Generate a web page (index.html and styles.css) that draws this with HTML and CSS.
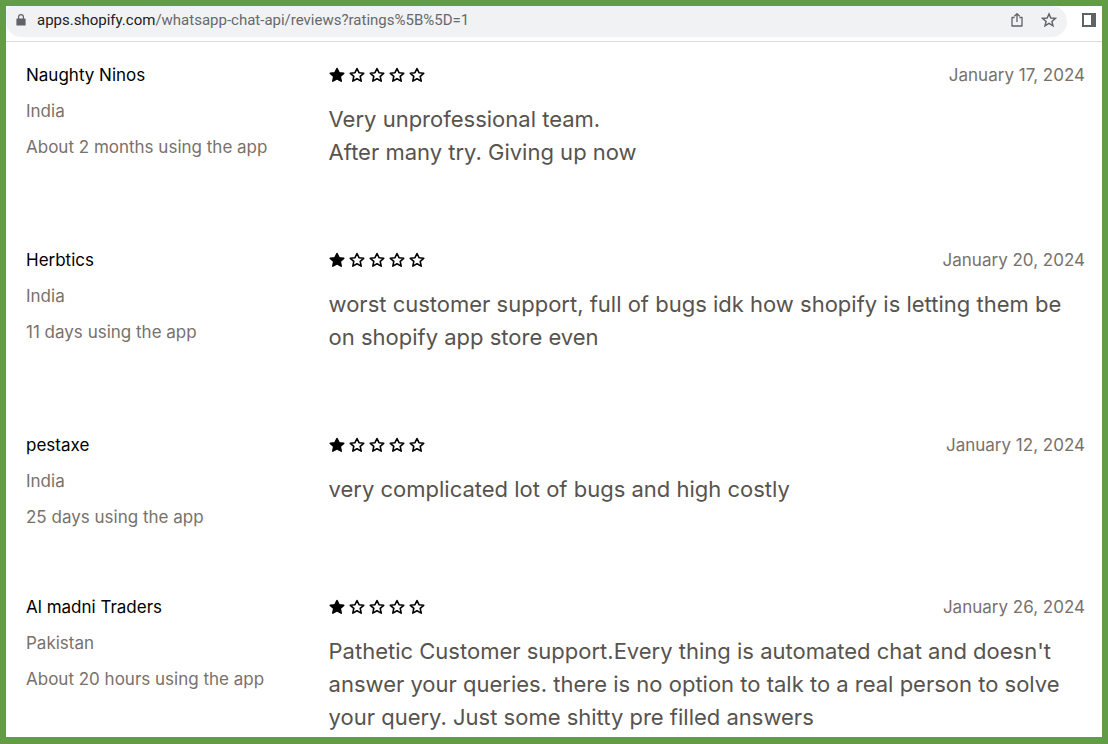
FILE: index.html
```
<!DOCTYPE html>
<html lang="en">
<head>
<meta charset="utf-8">
<title>App reviews</title>
<link rel="stylesheet" href="styles.css">
</head>
<body>
<svg class="defs" aria-hidden="true">
  <symbol id="star" viewBox="0 0 16 16"><path d="M8 1.500l2 4.200 4.700.6-3.500 3.100 1 4.700L8 11.700l-4.200 2.400 1-4.700-3.500-3.100 4.700-.6z" stroke="currentColor" stroke-width="1.600" stroke-linejoin="round"/></symbol>
</svg>
<div class="window">
  <header class="toolbar">
    <div class="address">
      <svg class="lock" viewBox="0 0 10 12" aria-hidden="true"><path d="M1 4.5h8q.6 0 .6.6v5.8q0 .6-.6.6H1q-.6 0-.6-.6V5.100q0-.6.6-.6z" fill="#5f6368"/><path d="M2.600 5V3a2.400 2.400 0 0 1 4.800 0v2" fill="none" stroke="#5f6368" stroke-width="1.200"/></svg>
      <a class="url" href="#"><span class="host">apps.shopify.com</span>/whatsapp-chat-api/reviews?ratings%5B%5D=1</a>
      <button class="tool" aria-label="Share"><svg class="icon" viewBox="0 0 16 16"><path d="M5.500 5.500H3v8.500h10V5.500h-2.500M8 10V1.700M5.300 4.300 8 1.600l2.700 2.700" fill="none" stroke="#5f6368" stroke-width="1.300" stroke-linejoin="round"/></svg></button>
      <button class="tool" aria-label="Bookmark"><svg class="icon" viewBox="0 0 16 16"><path d="M8 1.900l1.800 4.100 4.600.4-3.500 3 1.100 4.400L8 11.400l-4 2.400 1.100-4.400-3.500-3 4.600-.4z" fill="none" stroke="#5f6368" stroke-width="1.400"/></svg></button>
    </div>
    <button class="tool" aria-label="Side panel"><svg class="icon" viewBox="0 0 16 16"><path d="M1 1h14v14H1z" fill="#5f6368"/><path d="M3 3h7v10H3z" fill="#fff"/></svg></button>
  </header>
  <main class="reviews">
    <article class="review">
      <div class="author"><h2 class="name">Naughty Ninos</h2><p class="meta">India</p><p class="meta">About 2 months using the app</p></div>
      <div class="content">
        <div class="summary"><div class="stars" role="img" aria-label="1 out of 5 stars"><svg class="star full"><use href="#star"/></svg><svg class="star"><use href="#star"/></svg><svg class="star"><use href="#star"/></svg><svg class="star"><use href="#star"/></svg><svg class="star"><use href="#star"/></svg></div><time class="date">January 17, 2024</time></div>
        <p class="text">Very unprofessional team.<br>After many try. Giving up now</p>
      </div>
    </article>
    <article class="review">
      <div class="author"><h2 class="name">Herbtics</h2><p class="meta">India</p><p class="meta">11 days using the app</p></div>
      <div class="content">
        <div class="summary"><div class="stars" role="img" aria-label="1 out of 5 stars"><svg class="star full"><use href="#star"/></svg><svg class="star"><use href="#star"/></svg><svg class="star"><use href="#star"/></svg><svg class="star"><use href="#star"/></svg><svg class="star"><use href="#star"/></svg></div><time class="date">January 20, 2024</time></div>
        <p class="text">worst customer support, full of bugs idk how shopify is letting them be on shopify app store even</p>
      </div>
    </article>
    <article class="review">
      <div class="author"><h2 class="name">pestaxe</h2><p class="meta">India</p><p class="meta">25 days using the app</p></div>
      <div class="content">
        <div class="summary"><div class="stars" role="img" aria-label="1 out of 5 stars"><svg class="star full"><use href="#star"/></svg><svg class="star"><use href="#star"/></svg><svg class="star"><use href="#star"/></svg><svg class="star"><use href="#star"/></svg><svg class="star"><use href="#star"/></svg></div><time class="date">January 12, 2024</time></div>
        <p class="text">very complicated lot of bugs and high costly</p>
      </div>
    </article>
    <article class="review">
      <div class="author"><h2 class="name">Al madni Traders</h2><p class="meta">Pakistan</p><p class="meta">About 20 hours using the app</p></div>
      <div class="content">
        <div class="summary"><div class="stars" role="img" aria-label="1 out of 5 stars"><svg class="star full"><use href="#star"/></svg><svg class="star"><use href="#star"/></svg><svg class="star"><use href="#star"/></svg><svg class="star"><use href="#star"/></svg><svg class="star"><use href="#star"/></svg></div><time class="date">January 26, 2024</time></div>
        <p class="text">Pathetic Customer support.Every thing is automated chat and doesn't answer your queries. there is no option to talk to a real person to solve your query. Just some shitty pre filled answers</p>
      </div>
    </article>
  </main>
</div>
</body>
</html>
```
FILE: styles.css
```
* { box-sizing: border-box; }
body {
  margin: 0;
  min-height: 100vh;
  display: flex;
  padding: 6px 6px 7px;
  background: #629c46;
  font-family: Inter, "Liberation Sans", sans-serif;
}
.defs { position: absolute; width: 0; height: 0; }
.window { flex: 1; min-width: 0; background: #fff; }
.toolbar {
  display: flex;
  align-items: flex-start;
  gap: 14px;
  height: 36px;
  padding-right: 5px;
  border-bottom: 1px solid #dadbdd;
}
.address {
  flex: 1;
  display: flex;
  align-items: center;
  height: 31px;
  padding: 0 10px 3px;
  background: #f1f2f4;
  border-radius: 6px 16px 16px 16px;
}
.lock { width: 10px; height: 12px; }
.url {
  flex: 1;
  margin-left: 11px;
  color: #66696d;
  font-family: Roboto, sans-serif;
  font-size: 15px;
  text-decoration: none;
}
.host { color: #202124; }
.tool {
  display: flex;
  padding: 0;
  border: 0;
  background: none;
}
.address .tool + .tool { margin-left: 16px; }
.toolbar > .tool { margin-top: 6px; }
.icon { width: 16px; height: 16px; }
.reviews { padding: 21px 17px 3px 20px; }
.review {
  display: grid;
  grid-template-columns: 2fr 5fr;
  padding-bottom: 66px;
}
.review:last-child { padding-bottom: 0; }
.author { display: flex; flex-direction: column; gap: 12px; }
.name, .meta, .date { margin: 0; font-size: 17px; line-height: 24px; }
.name { color: #000; font-weight: 400; }
.meta, .date { color: #78716c; font-weight: 400; }
.summary { display: flex; justify-content: space-between; }
.stars { display: flex; gap: 4px; align-items: center; }
.star { width: 16px; height: 16px; fill: none; color: #000; }
.star.full { fill: #000; }
.text {
  margin: 16px 0 0;
  padding-bottom: 13px;
  color: #57534e;
  font-size: 22px;
  line-height: 33px;
}
.review:last-child .text { padding-bottom: 0; }
```
